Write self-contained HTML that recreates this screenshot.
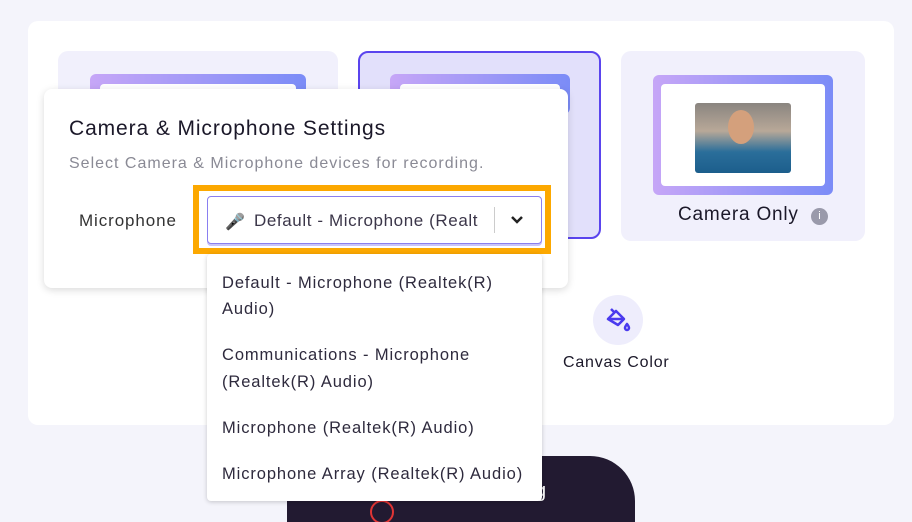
<!DOCTYPE html>
<html><head><style>
*{margin:0;padding:0;box-sizing:border-box}
html,body{width:912px;height:522px;overflow:hidden}
body{background:#f4f4fb;font-family:"Liberation Sans",sans-serif;position:relative;color:#1f1b2d}
.abs{position:absolute}
.card{left:28px;top:21px;width:866px;height:404px;background:#fff;border-radius:10px}
.opt{background:#f1f0fc;border-radius:10px}
.grad{background:linear-gradient(90deg,#c6a6f7,#7b8cf7);border-radius:6px}
.dd div{white-space:nowrap}
</style></head><body>
<div class="abs card"></div>
<div class="abs opt" style="left:58px;top:51px;width:280px;height:190px"></div>
<div class="abs grad" style="left:90px;top:74px;width:216px;height:40px"></div>
<div class="abs" style="left:100px;top:84px;width:196px;height:20px;background:#fff;border-radius:4px"></div>
<div class="abs" style="left:358px;top:51px;width:243px;height:188px;background:#e2e0fb;border:2px solid #5a44ee;border-radius:10px"></div>
<div class="abs grad" style="left:390px;top:74px;width:180px;height:40px"></div>
<div class="abs" style="left:400px;top:84px;width:160px;height:20px;background:#fff;border-radius:4px"></div>
<div class="abs opt" style="left:621px;top:51px;width:244px;height:190px"></div>
<div class="abs grad" style="left:653px;top:75px;width:180px;height:120px"></div>
<div class="abs" style="left:661px;top:84px;width:164px;height:102px;background:#fff;border-radius:4px"></div>
<div class="abs" style="left:695px;top:103px;width:96px;height:70px;background:linear-gradient(180deg,#8a8580 0%,#b8a898 40%,#2a6e9a 70%,#1c5e8c 100%);border-radius:3px"></div>
<div class="abs" style="left:728px;top:110px;width:26px;height:34px;background:#d4a07c;border-radius:50%"></div>
<div class="abs" style="left:678px;top:204px;font-size:19px;letter-spacing:0.8px;color:#1b1829">Camera Only</div>
<div class="abs" style="left:811px;top:208px;width:17px;height:17px;border-radius:50%;background:#9a9aab;color:#fff;font-size:11px;text-align:center;line-height:17px">i</div>
<div class="abs" style="left:593px;top:295px;width:50px;height:50px;border-radius:50%;background:#eeedfc"></div>
<svg class="abs" style="left:603px;top:305px" width="30" height="30" viewBox="0 0 30 30" fill="none" stroke="#4a3aee" stroke-width="2.5" stroke-linejoin="round"><path d="M8 4l4 4M5 14l8-8 8 8-6 6z"/><path d="M5 14h16"/><path d="M24 19c1.5 2 2 3 2 4a2 2 0 0 1-4 0c0-1 .5-2 2-4z"/></svg>
<div class="abs" style="left:563px;top:354px;font-size:16px;letter-spacing:0.8px;color:#1b1829">Canvas Color</div>
<div class="abs" style="left:287px;top:456px;width:348px;height:66px;background:#221a31;border-radius:45px 45px 0 0"></div>
<div class="abs" style="left:535px;top:480px;color:#fff;font-size:20px">g</div>
<div class="abs" style="left:370px;top:500px;width:24px;height:24px;border:2px solid #e03535;border-radius:50%"></div>
<div class="abs" style="left:44px;top:89px;width:524px;height:199px;background:#fff;border-radius:8px;box-shadow:0 2px 8px rgba(0,0,0,.15)"></div>
<div class="abs" style="left:69px;top:117px;font-size:21px;letter-spacing:0.9px;color:#1b1829">Camera &amp; Microphone Settings</div>
<div class="abs" style="left:69px;top:155px;font-size:16px;letter-spacing:1px;color:#8a8a95">Select Camera &amp; Microphone devices for recording.</div>
<div class="abs" style="left:79px;top:211px;font-size:17px;letter-spacing:0.9px;color:#333">Microphone</div>
<div class="abs" style="left:193px;top:185px;width:358px;height:69px;border:6px solid #fca800"></div>
<div class="abs" style="left:207px;top:196px;width:335px;height:48px;border:1.5px solid #8a7ff0;border-radius:4px;background:#fff;box-shadow:0 2px 0 #c9c4f7"></div>
<div class="abs" style="left:225px;top:212px;font-size:16px;color:#66607a">🎤</div>
<div class="abs" style="left:254px;top:211px;font-size:17px;letter-spacing:0.6px;color:#3b3649;white-space:nowrap;width:230px;overflow:hidden">Default - Microphone (Realt</div>
<div class="abs" style="left:494px;top:207px;width:1px;height:26px;background:#ccc"></div>
<svg class="abs" style="left:509px;top:214px" width="16" height="12" viewBox="0 0 16 12"><path d="M3 3l5 5 5-5" fill="none" stroke="#222" stroke-width="2.5"/></svg>
<div class="abs dd" style="left:207px;top:254px;width:335px;height:247px;background:#fff;border-radius:4px;box-shadow:0 1px 5px rgba(0,0,0,.2);font-size:16.5px;letter-spacing:0.9px;color:#2e2a3d;line-height:26px">
<div class="abs" style="left:15px;top:16px">Default - Microphone (Realtek(R)</div>
<div class="abs" style="left:15px;top:42px">Audio)</div>
<div class="abs" style="left:15px;top:88px">Communications - Microphone</div>
<div class="abs" style="left:15px;top:115px">(Realtek(R) Audio)</div>
<div class="abs" style="left:15px;top:161px">Microphone (Realtek(R) Audio)</div>
<div class="abs" style="left:15px;top:207px">Microphone Array (Realtek(R) Audio)</div>
</div>
</body></html>
